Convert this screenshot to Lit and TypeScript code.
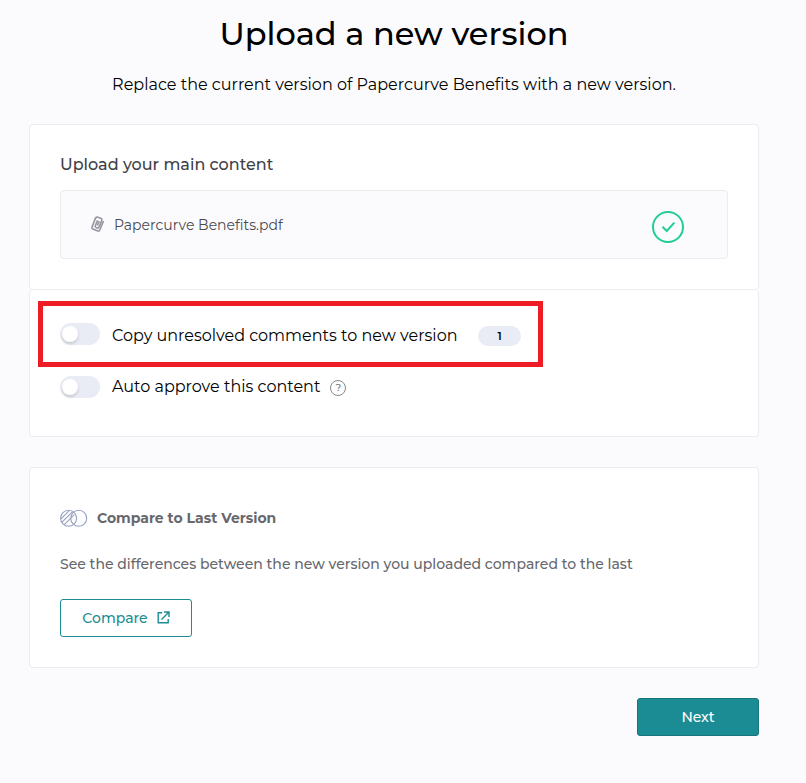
import { LitElement, html, css } from 'lit';
import { customElement, property } from 'lit/decorators.js';

@customElement('toggle-switch')
export class ToggleSwitch extends LitElement {
  @property({ type: Boolean, reflect: true }) checked = false;

  static styles = css`
    :host {
      display: flex;
      align-items: center;
      box-sizing: border-box;
      flex: none;
      width: 40px;
      height: 22px;
      padding: 0 2px;
      border-radius: 11px;
      background: #e9ecf4;
      cursor: pointer;
    }

    :host([checked]) {
      justify-content: flex-end;
      background: #1c8c94;
    }

    .knob {
      width: 16px;
      height: 16px;
      border-radius: 50%;
      background: #fff;
      box-shadow: 0 2px 3px rgba(0, 0, 0, 0.15);
    }
  `;

  constructor() {
    super();
    this.addEventListener('click', () => (this.checked = !this.checked));
  }

  render() {
    return html`<div class="knob"></div>`;
  }
}

@customElement('app-root')
export class AppRoot extends LitElement {
  static styles = css`
    :host {
      display: block;
      box-sizing: border-box;
      min-height: 783px;
      padding: 0 47px 0 29px;
      background: #fbfbfe;
      color: #000;
      font-family: Montserrat, Inter, sans-serif;
      font-size: 16px;
      line-height: 20px;
      white-space: nowrap;
    }

    svg {
      display: block;
      flex: none;
      fill: none;
    }

    h1,
    h2,
    p {
      margin: 0;
    }

    .title {
      padding-top: 14px;
      font-size: 32px;
      font-weight: 500;
      line-height: 40px;
      text-align: center;
    }

    .subtitle {
      margin: 21px 0 29px;
      text-align: center;
    }

    .card {
      box-sizing: border-box;
      padding: 0 30px;
      border: 1px solid #ebebf2;
      border-radius: 4px;
      background: #fff;
    }

    .upload {
      height: 166px;
      padding-top: 30px;
    }

    .label {
      color: #3f3f46;
      font-size: 16px;
      font-weight: 500;
    }

    .file {
      display: flex;
      align-items: center;
      box-sizing: border-box;
      height: 69px;
      margin-top: 15px;
      padding: 0 43px 0 29px;
      border: 1px solid #ebebf0;
      border-radius: 4px;
      background: #fbfbfe;
      color: #4a4a50;
      font-size: 14px;
    }

    .file-name {
      flex: 1;
      margin-left: 8px;
    }

    .done {
      margin-top: 4px;
    }

    .options {
      height: 147px;
      padding: 11px 8px 0;
      border-top: none;
    }

    .option {
      display: flex;
      align-items: center;
      box-sizing: border-box;
    }

    .option-text {
      margin-left: 12px;
    }

    .highlighted {
      width: 505px;
      height: 66px;
      padding: 0 17px;
      border: 5px solid #ee1c25;
    }

    .highlighted .option-text {
      margin-top: 4px;
    }

    .auto {
      margin-top: 9px;
      padding: 0 22px;
    }

    .badge {
      width: 43px;
      margin: 4px 0 0 auto;
      border-radius: 10px;
      background: #e9ecf4;
      font-size: 11px;
      font-weight: 600;
      text-align: center;
    }

    .help {
      display: flex;
      align-items: center;
      justify-content: center;
      box-sizing: border-box;
      width: 16px;
      height: 16px;
      margin: 2px 0 0 10px;
      border: 1px solid #85858c;
      border-radius: 50%;
      color: #6f6f76;
      font-size: 10px;
      font-weight: 500;
    }

    .compare {
      height: 201px;
      margin-top: 30px;
      padding-top: 40px;
      color: #67676d;
      font-size: 14px;
    }

    .compare-head {
      display: flex;
      align-items: center;
    }

    .compare-title {
      margin-left: 9px;
      font-size: 14px;
      font-weight: 700;
    }

    .compare-text {
      margin-top: 26px;
      font-weight: 500;
    }

    .button {
      display: flex;
      align-items: center;
      justify-content: center;
      box-sizing: border-box;
      height: 38px;
      padding: 0;
      border: 1px solid #1c8c94;
      border-radius: 3px;
      font: 500 14px/20px Montserrat, Inter, sans-serif;
      cursor: pointer;
    }

    .outline {
      gap: 9px;
      width: 132px;
      margin-top: 25px;
      background: #fff;
      color: #1c8c94;
    }

    .outline svg {
      margin-bottom: 2px;
    }

    .next {
      width: 122px;
      margin: 30px 0 0 auto;
      border-color: #17747b;
      background: #1c8c94;
      color: #fff;
    }
  `;

  render() {
    return html`
      <h1 class="title">Upload a new version</h1>
      <p class="subtitle">
        Replace the current version of Papercurve Benefits with a new version.
      </p>

      <section class="card upload">
        <h2 class="label">Upload your main content</h2>
        <div class="file">
          <svg width="16" height="18" viewBox="0 0 16 18" stroke="#9696a0" stroke-width="1.6" stroke-linejoin="round">
            <path d="M2 11.1 L5.5 2.1 Q6 0.9 7.2 1.1 L11.2 2.5 Q12.2 3 11.8 4.1 L9 11.2 Q8.4 12.4 7.2 12 L6 11.5 Q4.9 11 5.3 9.8 L7.5 4.4 M2 11.1 Q1.6 12.5 2.8 13 L8 15.1 Q9.2 15.5 9.7 14.3 L13.5 5 M7.4 9.5 L9.2 5.1" />
          </svg>
          <span class="file-name">Papercurve Benefits.pdf</span>
          <svg class="done" width="32" height="32" viewBox="0 0 32 32" stroke="#20ce93" stroke-width="2">
            <circle cx="16" cy="16" r="15" />
            <path d="M10.5 15.7 L14.8 20 L22.3 11.7" />
          </svg>
        </div>
      </section>

      <section class="card options">
        <div class="option highlighted">
          <toggle-switch></toggle-switch>
          <span class="option-text">Copy unresolved comments to new version</span>
          <span class="badge">1</span>
        </div>
        <div class="option auto">
          <toggle-switch></toggle-switch>
          <span class="option-text">Auto approve this content</span>
          <span class="help">?</span>
        </div>
      </section>

      <section class="card compare">
        <div class="compare-head">
          <svg width="28" height="18" viewBox="0 0 28 18" stroke="#97a2c0" stroke-width="1.1">
            <circle cx="8.6" cy="9.3" r="8" />
            <circle cx="18.7" cy="9.3" r="8" />
            <path d="M1 9.8 L9 1.8 M1.8 13.3 L12.8 2.3 M4 15.9 L14.3 5.6" />
          </svg>
          <h2 class="compare-title">Compare to Last Version</h2>
        </div>
        <p class="compare-text">
          See the differences between the new version you uploaded compared to the last
        </p>
        <button class="button outline">
          <span>Compare</span>
          <svg width="13" height="13" viewBox="0 0 13 13" stroke="#1c8c94" stroke-width="1.4">
            <path d="M5.2 1.7 H1.2 V11.8 H11.2 V8 M7 1 H12 V6 M12 1 L4.5 8.5" />
          </svg>
        </button>
      </section>

      <button class="button next">Next</button>
    `;
  }
}
